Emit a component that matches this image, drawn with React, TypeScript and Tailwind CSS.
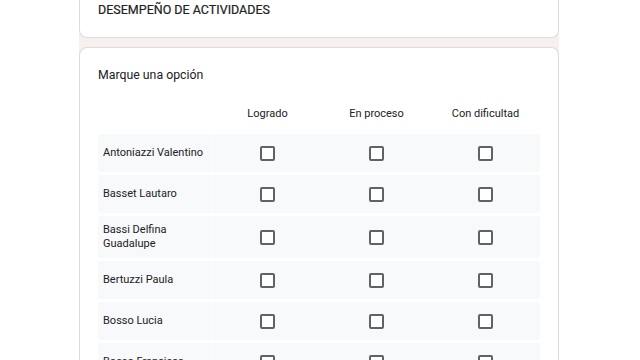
const students = [
  "Antoniazzi Valentino",
  "Basset Lautaro",
  "Bassi Delfina Guadalupe",
  "Bertuzzi Paula",
  "Bosso Lucia",
  "Bosso Francisco",
];

const options = ["Logrado", "En proceso", "Con dificultad"];

function Box() {
  return (
    <span className="block h-[15px] w-[15px] rounded-[2px] border-2 border-[#5f6368] bg-white" />
  );
}

export default function App() {
  return (
    <div
      className="h-[360px] w-[640px] overflow-hidden bg-white text-[#202124]"
      style={{ fontFamily: "Roboto, 'Liberation Sans', sans-serif" }}
    >
      <div className="ml-[79px] flex w-[480px] flex-col gap-[9px] bg-[#f6f1ef]">
        {/* section header card, top cut off */}
        <div className="rounded-b-lg border border-t-0 border-[#dadce0] bg-white px-[18px] pb-[19px] pt-[2px]">
          <h2 className="text-[12.5px] leading-[16px] text-[#202124] [-webkit-text-stroke:0.2px_#202124]">
            DESEMPEÑO DE ACTIVIDADES
          </h2>
        </div>

        {/* grid question */}
        <div className="rounded-t-lg border border-b-0 border-[#dadce0] bg-white px-[18px] pt-[19px] pb-6">
          <p className="text-[12.3px] leading-[16px]">Marque una opción</p>

          <div className="mt-[23px] mb-[12px] grid grid-cols-[115px_1fr_1fr_1fr] text-[11px] leading-[16px]">
            <span />
            {options.map((o) => (
              <span key={o} className="text-center">
                {o}
              </span>
            ))}
          </div>

          <div className="flex flex-col gap-[3px]">
            {students.map((s) => (
              <div
                key={s}
                className="grid min-h-[38px] grid-cols-[115px_1fr_1fr_1fr] rounded-[3px] bg-[#f8f9fa]"
              >
                <div className="flex items-center border-r border-[#fdfdfd] py-[7px] pl-[5px] pr-2 text-[11px] leading-[14px]">
                  {s}
                </div>
                {options.map((o) => (
                  <div key={o} className="flex items-center justify-center">
                    <Box />
                  </div>
                ))}
              </div>
            ))}
          </div>
        </div>
      </div>
    </div>
  );
}
